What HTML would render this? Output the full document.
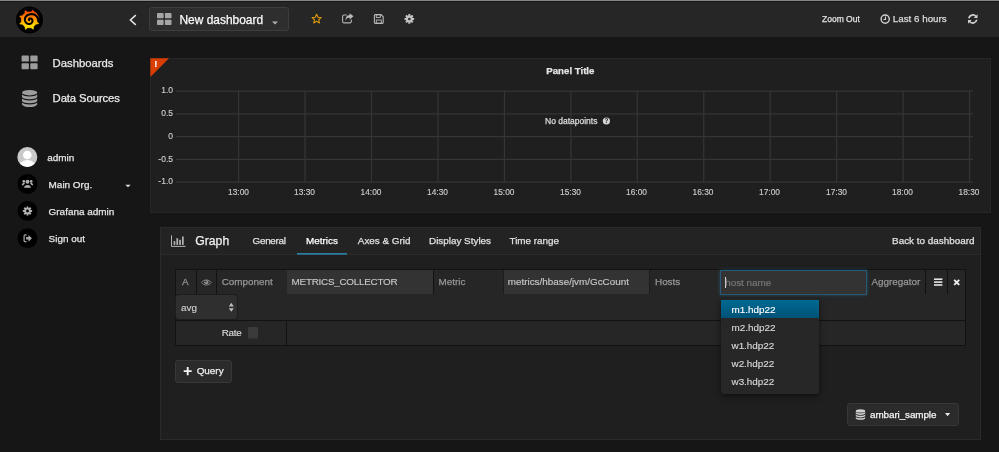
<!DOCTYPE html>
<html lang="en">
<head>
<meta charset="utf-8">
<title>Grafana - New dashboard</title>
<style>
*{box-sizing:border-box;margin:0;padding:0}
html,body{width:999px;height:452px;overflow:hidden;background:#161616}
body{position:relative;font-family:"Liberation Sans",Arial,Helvetica,sans-serif;color:#d8d9da;font-size:9.94px;-webkit-font-smoothing:antialiased}
.abs{position:absolute}
.t{position:absolute;white-space:nowrap;line-height:1}
.t,.tab,.lab{-webkit-text-stroke:0.25px currentColor}
.inptxt,.ddi{-webkit-text-stroke:0.14px currentColor}
.yl,.xl{-webkit-text-stroke:0.12px currentColor}
#wrap{position:absolute;left:0;top:0;width:999px;height:452px;will-change:transform;transform:translateZ(0)}
svg{position:absolute;overflow:visible}
/* top */
#topline{left:0;top:0;width:999px;height:1px;background:#868686}
#topline2{left:0;top:1px;width:999px;height:1px;background:#181818}
#navbar{left:0;top:2px;width:999px;height:35px;background:#262626}
#dashbtn{left:149px;top:7px;width:139.5px;height:23.5px;border:1px solid #3d3d3d;border-radius:3px;background:#2e2e2e}
/* panel */
#panel{left:150px;top:58px;width:841px;height:155px;background:#1f1f1f;border:1px solid #262626}
.hl{position:absolute;left:176px;width:797px;height:1px;background:#414141}
.vl{position:absolute;top:90px;width:1px;height:92px;background:#414141}
.yl{position:absolute;right:826px;white-space:nowrap;font-size:8.5px;line-height:1;color:#d0d0d0}
.xl{position:absolute;top:188px;width:40px;margin-left:-20px;text-align:center;font-size:8.35px;line-height:1;color:#d0d0d0}
/* editor */
#editor{left:160px;top:227px;width:821px;height:212.5px;background:#1f1f1f;border:1px solid #2a2a2a}
#edhead{left:161px;top:228px;width:819px;height:27px;background:#232323;border-bottom:1px solid #2b2b2b}
.tab{position:absolute;top:236px;font-size:9.9px;line-height:1;white-space:nowrap;color:#e0e0e0}
#qbox{left:175px;top:269px;width:791px;height:77px;background:#262626;border:1px solid #121212}
.sep{position:absolute;background:#121212}
.lab{position:absolute;font-size:9.9px;line-height:1;white-space:nowrap;color:#969696}
.inp{position:absolute;background:#333333;height:24px;top:270px}
.inptxt{position:absolute;font-size:9.9px;line-height:1;white-space:nowrap;color:#c8c8c8}
.btn{position:absolute;background:#2b2b2b;border:1px solid #373737;border-radius:3px}
/* dropdown */
#dd{left:721px;top:299px;width:98px;height:94.5px;background:#272727;border-radius:0 0 3px 3px;box-shadow:0 2px 6px rgba(0,0,0,.55)}
.ddi{position:absolute;left:0;width:98px;height:18px;font-size:9.9px;line-height:19px;padding-left:10.5px;color:#d8d9da;white-space:nowrap}
.ddi.act{background:linear-gradient(#006a92,#005277);color:#fff}
</style>
</head>
<body>
<div id="wrap">
<!-- top bar -->
<div class="abs" id="navbar"></div>
<div class="abs" id="topline"></div>
<div class="abs" id="topline2"></div>

<!-- logo -->
<svg style="left:16px;top:6px" width="27" height="27" viewBox="0 0 27 27"><g transform="translate(0.000 0.400)">
  <defs><linearGradient id="lg" gradientUnits="userSpaceOnUse" x1="0" y1="3.5" x2="0" y2="23.5"><stop offset="0" stop-color="#ff4400"/><stop offset="0.45" stop-color="#ff9000"/><stop offset="0.72" stop-color="#ffd000"/><stop offset="1" stop-color="#ffee00"/></linearGradient></defs>
  <circle cx="13.5" cy="13.5" r="13.5" fill="#000"/>
  <path fill="url(#lg)" stroke="url(#lg)" stroke-width="0.6" stroke-linejoin="round" d="M13.20 5.60 L14.93 5.69 L16.97 3.92 L17.38 6.68 L18.50 8.20 L19.66 9.69 L20.46 11.62 L20.70 13.50 L21.10 13.50 L21.01 15.23 L22.78 17.27 L20.02 17.68 L18.79 19.09 L17.50 20.25 L17.31 22.95 L15.07 21.28 L13.20 21.40 L11.47 21.31 L9.43 23.08 L9.02 20.32 L7.61 19.09 L6.45 17.80 L3.75 17.61 L5.42 15.37 L5.30 13.50 L5.39 11.77 L3.62 9.73 L6.38 9.32 L7.61 7.91 L8.90 6.75 L9.09 4.05 L11.33 5.72 Z"/>
  <path fill="url(#lg)" d="M16.26 4.08 L16.68 4.23 L17.09 4.40 L17.49 4.59 L17.88 4.79 L18.27 5.01 L18.64 5.25 L19.00 5.51 L19.35 5.78 L19.69 6.06 L20.01 6.36 L20.32 6.68 L20.62 7.01 L20.90 7.35 L21.16 7.70 L21.41 8.06 L21.65 8.44 L21.86 8.82 L22.06 9.22 L22.24 9.62 L22.40 10.03 L22.54 10.45 L22.67 10.87 L22.77 11.30 L22.86 11.73 L22.93 12.16 L22.97 12.60 L23.00 13.04 L23.01 13.48 L22.99 13.92 L22.96 14.35 L22.36 14.30 L22.34 13.89 L22.29 13.48 L22.23 13.07 L22.15 12.68 L22.05 12.28 L21.93 11.90 L21.80 11.52 L21.65 11.15 L21.49 10.79 L21.31 10.44 L21.11 10.10 L20.91 9.77 L20.69 9.46 L20.45 9.15 L20.20 8.86 L19.95 8.59 L19.68 8.32 L19.40 8.07 L19.11 7.84 L18.82 7.62 L18.51 7.41 L18.20 7.22 L17.88 7.05 L17.56 6.89 L17.23 6.75 L16.90 6.62 L16.57 6.51 L16.23 6.41 L15.89 6.33 L15.55 6.27 Z"/>
  <path fill="none" stroke="#000" stroke-width="2.05" stroke-linecap="round" stroke-linejoin="round" d="M13.10 13.80 L13.04 13.73 L12.98 13.65 L12.94 13.55 L12.90 13.45 L12.89 13.33 L12.88 13.21 L12.90 13.08 L12.93 12.95 L12.99 12.82 L13.06 12.69 L13.15 12.56 L13.26 12.45 L13.39 12.34 L13.54 12.25 L13.70 12.17 L13.88 12.11 L14.07 12.07 L14.27 12.05 L14.48 12.06 L14.69 12.09 L14.90 12.15 L15.11 12.23 L15.32 12.34 L15.52 12.48 L15.71 12.64 L15.88 12.83 L16.04 13.04 L16.17 13.27 L16.28 13.53 L16.36 13.80 L16.42 14.09 L16.44 14.38 L16.43 14.69 L16.39 15.00 L16.31 15.30 L16.19 15.61 L16.04 15.91 L15.85 16.19 L15.63 16.46 L15.38 16.71 L15.09 16.93 L14.78 17.12 L14.44 17.28 L14.08 17.41 L13.70 17.50 L13.31 17.55 L12.90 17.55 L12.49 17.52 L12.08 17.43 L11.68 17.30 L11.28 17.13 L10.90 16.91 L10.54 16.65 L10.20 16.34 L9.90 16.00 L9.63 15.61 L9.39 15.20 L9.20 14.76 L9.06 14.29 L8.96 13.80 L8.92 13.30 L8.93 12.79 L9.00 12.27 L9.12 11.76 L9.30 11.26 L9.53 10.77 L9.82 10.31 L10.16 9.87 L10.55 9.47 L10.99 9.10 L11.47 8.78 L11.98 8.51 L12.53 8.29 L13.10 8.13 L13.70 8.03 L14.33 7.85 L14.99 7.73 L15.68 7.70 L16.40 7.74 L17.12 7.87 L17.85 8.08 L18.57 8.39 L19.27 8.78 L19.94 9.27 L20.57 9.84 L21.14 10.49 L21.65 11.22 L22.09 12.02 L22.45 12.88 L22.71 13.80"/>
</g></svg>

<!-- back chevron -->
<svg style="left:129px;top:14px" width="8" height="11" viewBox="0 0 8 11"><g transform="translate(0.000 0.500)"><path d="M6.8 0.6 L1.4 5.5 L6.8 10.4" fill="none" stroke="#e4e4e4" stroke-width="1.5"/></g></svg>

<div class="abs" id="dashbtn"></div>
<svg style="left:157px;top:13px" width="14.5" height="12" viewBox="0 0 14.5 12"><g fill="#a6a6a6"><rect x="0" y="0" width="6.6" height="5.3" rx="0.8"/><rect x="7.9" y="0" width="6.6" height="5.3" rx="0.8"/><rect x="0" y="6.7" width="6.6" height="5.3" rx="0.8"/><rect x="7.9" y="6.7" width="6.6" height="5.3" rx="0.8"/></g></svg>
<div class="t" style="left:179.5px;top:13.5px;transform:translateY(0.6px);font-size:11.95px;color:#fafafa">New dashboard</div>
<svg style="left:272px;top:21px" width="6" height="3" viewBox="0 0 6 3"><g transform="translate(0.000 0.500)"><path d="M0 0 L6 0 L3 3 Z" fill="#b0b0b0"/></g></svg>

<!-- star -->
<svg style="left:311px;top:13px" width="10.6" height="10.1" viewBox="0 0 22 21"><g transform="translate(0.623 0.832)"><path d="M11 1.8 L13.8 8 L20.4 8.7 L15.5 13.2 L16.9 19.8 L11 16.4 L5.1 19.8 L6.5 13.2 L1.6 8.7 L8.2 8 Z" fill="none" stroke="#dd990c" stroke-width="2.3" stroke-linejoin="round"/></g></svg>
<!-- share -->
<svg style="left:342px;top:13px" width="11.5" height="10" viewBox="0 0 23 20"><g transform="translate(0.000 0.400)"><path d="M18.6 12.5 V16.4 a3 3 0 0 1 -3 3 H4.2 a3 3 0 0 1 -3 -3 V6.6 A3 3 0 0 1 4.2 3.6 H9.5" fill="none" stroke="#b4b4b4" stroke-width="2.2"/><path d="M15.2 0 L23 6.2 L15.2 12.4 V8.8 C11 8.8 8.6 10.6 7.6 15 C6.6 8.6 9.6 4.2 15.2 3.7 Z" fill="#bcbcbc"/></g></svg>
<!-- save -->
<svg style="left:373px;top:14px" width="10" height="10" viewBox="0 0 20 20"><g transform="translate(1.600 0.000)"><path d="M1.2 3 A1.8 1.8 0 0 1 3 1.2 H14.5 L18.8 5.5 V17 A1.8 1.8 0 0 1 17 18.8 H3 A1.8 1.8 0 0 1 1.2 17 Z" fill="none" stroke="#b8b8b8" stroke-width="2.2"/><rect x="5" y="1.5" width="8" height="5.5" fill="none" stroke="#b8b8b8" stroke-width="1.8"/><rect x="5" y="12" width="10" height="6.5" fill="none" stroke="#b8b8b8" stroke-width="1.8"/></g></svg>
<!-- cog -->
<svg style="left:404px;top:14px" width="9.7" height="9.7" viewBox="-10 -10 20 20"><g transform="translate(1.031 0.206)"><g fill="#c4c4c4"><circle r="6.9"/><g id="teeth"><rect x="-2.1" y="-10" width="4.2" height="20" rx="0.8"/><rect x="-2.1" y="-10" width="4.2" height="20" rx="0.8" transform="rotate(45)"/><rect x="-2.1" y="-10" width="4.2" height="20" rx="0.8" transform="rotate(90)"/><rect x="-2.1" y="-10" width="4.2" height="20" rx="0.8" transform="rotate(135)"/></g></g><circle r="2.7" fill="#262626"/></g></svg>

<div class="t" style="left:822px;top:14.8px;font-size:8.5px;color:#e2e2e2">Zoom Out</div>
<!-- clock -->
<svg style="left:880px;top:14px" width="9.8" height="9.8" viewBox="0 0 20 20"><g transform="translate(0.612 0.408)"><circle cx="10" cy="10" r="8.4" fill="none" stroke="#d0d0d0" stroke-width="2.9"/><path d="M10.6 4.8 V10.9 H6.2" fill="none" stroke="#d0d0d0" stroke-width="2.3"/></g></svg>
<div class="t" style="left:892.8px;top:14.3px;font-size:9.8px;color:#dcdcdc">Last 6 hours</div>
<!-- refresh -->
<svg style="left:967px;top:13px" width="10.2" height="10.2" viewBox="0 0 20 20"><g transform="translate(1.373 1.765)"><g fill="none" stroke="#d0d0d0" stroke-width="3.3"><path d="M2.2 8.6 A8 8 0 0 1 16.2 5"/><path d="M17.8 11.4 A8 8 0 0 1 3.8 15"/></g><path d="M19.4 0.6 V8 H12 Z" fill="#d0d0d0"/><path d="M0.6 19.4 V12 H8 Z" fill="#d0d0d0"/></g></svg>

<!-- sidebar -->
<svg style="left:21px;top:55px" width="16" height="13.6" viewBox="0 0 16 13.6"><g transform="translate(0.600 0.600)"><g fill="#9d9d9d"><rect x="0" y="0" width="7.3" height="6" rx="0.9"/><rect x="8.7" y="0" width="7.3" height="6" rx="0.9"/><rect x="0" y="7.6" width="7.3" height="6" rx="0.9"/><rect x="8.7" y="7.6" width="7.3" height="6" rx="0.9"/></g></g></svg>
<div class="t" style="left:52.6px;top:57.5px;font-size:11.3px;color:#eaeaea">Dashboards</div>
<svg style="left:22px;top:90px" width="15.2" height="17" viewBox="0 0 15.2 17"><g fill="#9d9d9d"><ellipse cx="7.6" cy="2.7" rx="7.6" ry="2.7"/><path d="M0 4.6 C1.5 7.2 13.7 7.2 15.2 4.6 V7.1 C13.7 10 1.5 10 0 7.1 Z"/><path d="M0 8.6 C1.5 11.2 13.7 11.2 15.2 8.6 V11.1 C13.7 14 1.5 14 0 11.1 Z"/><path d="M0 12.6 C1.5 15.2 13.7 15.2 15.2 12.6 V14.4 C13.7 17.8 1.5 17.8 0 14.4 Z"/></g></svg>
<div class="t" style="left:52.6px;top:92.7px;font-size:11.3px;letter-spacing:-0.1px;color:#eaeaea">Data Sources</div>

<!-- user rows -->
<svg style="left:17px;top:147px" width="20" height="20" viewBox="0 0 20 20"><g transform="translate(0.300 0.000)"><defs><clipPath id="av"><circle cx="10" cy="10" r="10"/></clipPath></defs><circle cx="10" cy="10" r="10" fill="#c9c9c9"/><g clip-path="url(#av)" fill="#fff"><circle cx="10" cy="8" r="4.3"/><ellipse cx="10" cy="20.4" rx="8.6" ry="7.4"/></g></g></svg>
<div class="t" style="left:47.3px;top:152.6px;font-size:9.94px;color:#e6e6e6">admin</div>

<svg style="left:17px;top:173px" width="20" height="20" viewBox="0 0 20 20"><g transform="translate(0.500 0.900)"><circle cx="10" cy="10" r="10" fill="#000"/><g fill="#b0b0b0" transform="translate(10 10.4) scale(0.84) translate(-10 -10.6)"><circle cx="10" cy="7.6" r="2.3"/><path d="M5.9 14.8 C5.9 10.2 14.1 10.2 14.1 14.8 Z"/><circle cx="5.6" cy="7.2" r="1.6"/><circle cx="14.4" cy="7.2" r="1.6"/><path d="M3.2 11.8 C3.2 8.6 6.4 8.8 7 9.6 C5.8 10.4 5.4 11 5.2 11.8 Z"/><path d="M16.8 11.8 C16.8 8.6 13.6 8.8 13 9.6 C14.2 10.4 14.6 11 14.8 11.8 Z"/></g></g></svg>
<div class="t" style="left:48.6px;top:179.7px;font-size:9.94px;color:#e6e6e6">Main Org.</div>
<svg style="left:125px;top:184px" width="5.4" height="2.8" viewBox="0 0 6 3"><g transform="translate(0.333 0.643)"><path d="M0 0 L6 0 L3 3 Z" fill="#e0e0e0"/></g></svg>

<svg style="left:17px;top:201px" width="20" height="20" viewBox="0 0 20 20"><g transform="translate(0.500 0.000)"><circle cx="10" cy="10" r="10" fill="#000"/><g transform="translate(10 10) scale(0.46)"><g fill="#b5b5b5"><circle r="6.6"/><rect x="-2.1" y="-10" width="4.2" height="20" rx="0.8"/><rect x="-2.1" y="-10" width="4.2" height="20" rx="0.8" transform="rotate(45)"/><rect x="-2.1" y="-10" width="4.2" height="20" rx="0.8" transform="rotate(90)"/><rect x="-2.1" y="-10" width="4.2" height="20" rx="0.8" transform="rotate(135)"/></g><circle r="3" fill="#000"/></g></g></svg>
<div class="t" style="left:48.6px;top:206.8px;font-size:9.94px;color:#e6e6e6">Grafana admin</div>

<svg style="left:17px;top:228px" width="20" height="20" viewBox="0 0 20 20"><g transform="translate(0.500 0.300)"><circle cx="10" cy="10" r="10" fill="#000"/><g fill="none" stroke="#a9a9a9" stroke-width="1.2"><path d="M9 6.6 H7.6 A1 1 0 0 0 6.6 7.6 V12.4 A1 1 0 0 0 7.6 13.4 H9"/></g><path d="M8.6 8.8 H11 V6.6 L14.4 10 L11 13.4 V11.2 H8.6 Z" fill="#a9a9a9"/></g></svg>
<div class="t" style="left:48.6px;top:233.9px;font-size:9.94px;color:#e6e6e6">Sign out</div>

<!-- graph panel -->
<div class="abs" id="panel"></div>
<svg style="left:150px;top:58px" width="19" height="19" viewBox="0 0 19 19"><g transform="translate(0.400 0.300)"><path d="M0 0 H18.6 L0 18.6 Z" fill="#d73e00"/></g></svg>
<div class="t" style="left:154.2px;top:59px;font-size:9.6px;font-weight:bold;color:#fff;-webkit-text-stroke:0.15px #fff">!</div>
<div class="t" style="left:546.3px;top:66.2px;font-size:9.66px;font-weight:bold;color:#e4e4e4">Panel Title</div>

<svg style="left:0;top:0" width="999" height="452" viewBox="0 0 999 452"><g stroke="#353535" stroke-width="1.2" fill="none"><path d="M176 91.1 H973"/><path d="M176 113.85 H973"/><path d="M176 136.6 H973"/><path d="M176 159.35 H973"/><path d="M176 182.1 H973"/><path d="M238.60 91 V182.8"/><path d="M305.05 91 V182.8"/><path d="M371.50 91 V182.8"/><path d="M437.95 91 V182.8"/><path d="M504.40 91 V182.8"/><path d="M570.85 91 V182.8"/><path d="M637.30 91 V182.8"/><path d="M703.75 91 V182.8"/><path d="M770.20 91 V182.8"/><path d="M836.65 91 V182.8"/><path d="M903.10 91 V182.8"/><path d="M969.55 91 V182.8"/></g></svg>
<div class="yl" style="top:86.2px">1.0</div>
<div class="yl" style="top:109px">0.5</div>
<div class="yl" style="top:131.8px">0</div>
<div class="yl" style="top:154.6px">-0.5</div>
<div class="yl" style="top:177.4px">-1.0</div>

<div class="xl" style="left:238.5px">13:00</div>
<div class="xl" style="left:304.5px">13:30</div>
<div class="xl" style="left:371px">14:00</div>
<div class="xl" style="left:437.5px">14:30</div>
<div class="xl" style="left:504px">15:00</div>
<div class="xl" style="left:570.5px">15:30</div>
<div class="xl" style="left:636.5px">16:00</div>
<div class="xl" style="left:703px">16:30</div>
<div class="xl" style="left:769.5px">17:00</div>
<div class="xl" style="left:836.5px">17:30</div>
<div class="xl" style="left:902.5px">18:00</div>
<div class="xl" style="left:969px">18:30</div>

<div class="t" style="left:545px;top:117px;font-size:8.5px;color:#dcdcdc">No datapoints</div>
<svg style="left:602px;top:117px" width="7.2" height="7.2" viewBox="0 0 14 14"><g transform="translate(1.556 0.778)"><circle cx="7" cy="7" r="7" fill="#d6d6d6"/><text x="7" y="11.5" font-family="Liberation Sans, sans-serif" font-weight="bold" font-size="12.5" text-anchor="middle" fill="#1f1f1f">?</text></g></svg>

<!-- editor -->
<div class="abs" id="editor"></div>
<div class="abs" id="edhead"></div>
<svg style="left:171px;top:235px" width="14.6" height="11.6" viewBox="0 0 14.6 11.6"><g transform="translate(0.000 0.300)"><path d="M0.5 0 V11.1 H14.6" fill="none" stroke="#b4b4b4" stroke-width="1"/><g fill="#b4b4b4"><rect x="2.6" y="5.8" width="1.7" height="3.8"/><rect x="5.4" y="2.9" width="1.7" height="6.7"/><rect x="8.2" y="4.5" width="1.7" height="5.1"/><rect x="11" y="1.2" width="1.7" height="8.4"/></g></g></svg>
<div class="t" style="left:195.3px;top:234.6px;font-size:12.2px;color:#f0f0f0">Graph</div>
<div class="tab" style="left:252.6px;letter-spacing:-0.3px">General</div>
<div class="tab" style="left:306.1px;color:#fff">Metrics</div>
<div class="tab" style="left:357.8px">Axes &amp; Grid</div>
<div class="tab" style="left:429px">Display Styles</div>
<div class="tab" style="left:509.5px">Time range</div>
<div class="abs" style="left:297px;top:253px;width:50px;height:1px;background:#2b7ea3"></div><div class="abs" style="left:297px;top:254px;width:50px;height:1px;background:#2a647f"></div>
<div class="tab" style="left:892.1px;top:235.7px">Back to dashboard</div>

<!-- query box -->
<div class="abs" id="qbox"></div>
<div class="sep" style="left:176px;top:320px;width:789px;height:1px"></div>
<div class="sep" style="left:195.6px;top:270px;width:1px;height:24.4px"></div>
<div class="sep" style="left:216.2px;top:270px;width:1px;height:24.4px"></div>
<div class="lab" style="left:181.9px;top:277.3px">A</div>
<svg style="left:201px;top:278px" width="10.4" height="7.4" viewBox="0 0 20.8 14.8"><g transform="translate(0.400 1.600)"><path d="M1 7.4 C5 0.6 15.8 0.6 19.8 7.4 C15.8 14.2 5 14.2 1 7.4 Z" fill="none" stroke="#8e8e8e" stroke-width="1.8"/><circle cx="10.4" cy="6.8" r="4.2" fill="#8e8e8e"/><circle cx="9.4" cy="5.6" r="1.5" fill="#262626"/></g></svg>
<div class="lab" style="left:221.7px;top:277.3px">Component</div>
<div class="inp" style="left:286.6px;width:146px"></div>
<div class="inptxt" style="left:291.6px;top:277.1px;letter-spacing:-0.26px">METRICS_COLLECTOR</div>
<div class="sep" style="left:432.6px;top:270px;width:1px;height:24.4px"></div>
<div class="lab" style="left:438.6px;top:277.3px">Metric</div>
<div class="sep" style="left:503px;top:270px;width:1px;height:24.4px;background:#1c1c1c"></div>
<div class="inp" style="left:503.5px;width:145.5px"></div>
<div class="inptxt" style="left:507.7px;top:277.3px">metrics/hbase/jvm/GcCount</div>
<div class="sep" style="left:649px;top:270px;width:1px;height:24.4px;background:#1c1c1c"></div>
<div class="lab" style="left:655px;top:277.3px">Hosts</div>
<div class="inp" style="left:720px;top:269.5px;width:147px;height:25.3px;border:1px solid #255a78;box-shadow:0 0 3.5px rgba(40,115,160,.5)"></div>
<div class="abs" style="left:725px;top:276.6px;width:1px;height:11px;background:#d8d8d8"></div>
<div class="inptxt" style="left:725.2px;top:277.8px;color:#7b7b7b">host name</div>
<div class="lab" style="left:871.5px;top:277.3px">Aggregator</div>
<div class="sep" style="left:925px;top:270px;width:1px;height:24.4px"></div>
<div class="sep" style="left:947.4px;top:270px;width:1px;height:24.4px"></div>
<svg style="left:934px;top:278px" width="8.4" height="7.4" viewBox="0 0 8.4 7.4"><g transform="translate(0.000 0.400)"><g fill="#e4e4e4"><rect y="0" width="8.4" height="1.6"/><rect y="2.9" width="8.4" height="1.6"/><rect y="5.8" width="8.4" height="1.6"/></g></g></svg>
<svg style="left:953px;top:279px" width="6.6" height="6.8" viewBox="0 0 6.6 6.8"><g transform="translate(0.400 0.000)"><path d="M0.8 0.9 L5.8 5.9 M5.8 0.9 L0.8 5.9" stroke="#f0f0f0" stroke-width="1.9" fill="none"/></g></svg>

<!-- avg select -->
<div class="abs" style="left:176px;top:295px;width:61px;height:24px;background:#2f2f2f;border-radius:3px;box-shadow:0 0 0 1px #1d1d1d"></div>
<div class="inptxt" style="left:181px;top:302.6px;color:#cfcfcf">avg</div>
<svg style="left:228px;top:302px" width="5" height="9" viewBox="0 0 5 9"><g transform="translate(0.800 0.800)"><path d="M0 3.6 L2.5 0 L5 3.6 Z M0 5.4 L2.5 9 L5 5.4 Z" fill="#bdbdbd"/></g></svg>

<!-- rate row -->
<div class="sep" style="left:286.2px;top:321px;width:1px;height:24.4px"></div>
<div class="inptxt" style="left:221.7px;top:328.2px;letter-spacing:-0.25px;color:#dadada">Rate</div>
<div class="abs" style="left:247.6px;top:327.4px;width:10.6px;height:11.2px;background:linear-gradient(#3b3b3b 80%,#303030);border-radius:1.5px"></div>

<!-- + Query -->
<div class="btn" style="left:175px;top:360px;width:57px;height:22.5px"></div>
<svg style="left:183px;top:367px" width="8" height="8.2" viewBox="0 0 8 8.2"><g transform="translate(0.700 0.000)"><path d="M4 0 V8.2 M0 4.1 H8" stroke="#f4f4f4" stroke-width="1.9" fill="none"/></g></svg>
<div class="t" style="left:196.7px;top:366.4px;font-size:9.9px;color:#f0f0f0">Query</div>

<!-- datasource button -->
<div class="btn" style="left:847.3px;top:403px;width:112.2px;height:22.6px"></div>
<svg style="left:855px;top:409px" width="9.6" height="10.6" viewBox="0 0 15.2 17"><g transform="translate(1.108 0.321)"><g fill="#d2d2d2"><ellipse cx="7.6" cy="2.7" rx="7.6" ry="2.7"/><path d="M0 4.6 C1.5 7.2 13.7 7.2 15.2 4.6 V7.1 C13.7 10 1.5 10 0 7.1 Z"/><path d="M0 8.6 C1.5 11.2 13.7 11.2 15.2 8.6 V11.1 C13.7 14 1.5 14 0 11.1 Z"/><path d="M0 12.6 C1.5 15.2 13.7 15.2 15.2 12.6 V14.4 C13.7 17.8 1.5 17.8 0 14.4 Z"/></g></g></svg>
<div class="t" style="left:870.1px;top:409.8px;font-size:9.9px;letter-spacing:-0.1px;color:#f4f4f4">ambari_sample</div>
<svg style="left:945px;top:413px" width="5.2" height="3.2" viewBox="0 0 6 3.6"><path d="M0 0 L6 0 L3 3.6 Z" fill="#e8e8e8"/></svg>

<!-- dropdown -->
<div class="abs" id="dd">
  <div class="ddi act" style="top:1px">m1.hdp22</div>
  <div class="ddi" style="top:19px">m2.hdp22</div>
  <div class="ddi" style="top:37px">w1.hdp22</div>
  <div class="ddi" style="top:55px">w2.hdp22</div>
  <div class="ddi" style="top:73px">w3.hdp22</div>
</div>
</div>
</body>
</html>
